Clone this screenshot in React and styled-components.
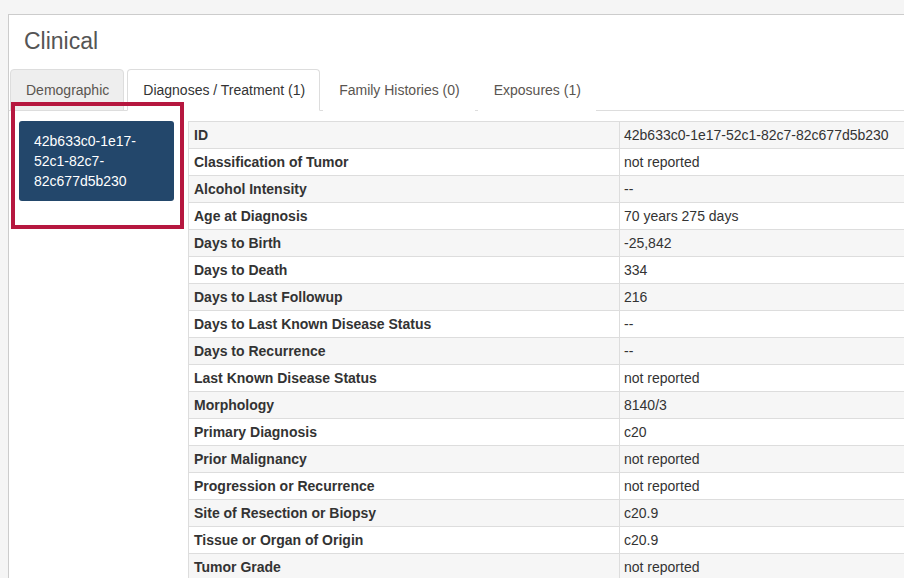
import styled, { createGlobalStyle } from 'styled-components';

const GlobalStyle = createGlobalStyle`
  html, body {
    margin: 0;
    background: #f5f5f5;
    overflow: hidden;
    font-family: "Liberation Sans", Arial, sans-serif;
    color: #333;
  }
`;

// Page + panel
const Page = styled.div`
  padding: 14px 0 0 8px;
  width: 1100px;
`;
const Panel = styled.div`
  background: #fff;
  border: 1px solid #ccc;
  width: 1000px;
  min-height: 600px;
`;
const Title = styled.h2`
  margin: 0;
  padding: 14px 15px 15px;
  font-size: 23px;
  line-height: 25px;
  font-weight: 400;
  color: #555;
`;

// Tabs
const Tabs = styled.ul`
  display: flex;
  list-style: none;
  margin: 0;
  padding: 0 0 0 1px;
  border-bottom: 1px solid #ddd;
`;
const Tab = styled.li`
  margin: 0 3px -1px 0;
  padding: 10px 14px 10px 15px;
  font-size: 14px;
  line-height: 20px;
  border: 1px solid ${p => (p.$active || p.$muted ? '#ddd' : 'transparent')};
  border-bottom-color: ${p => (p.$active ? '#fff' : p.$muted ? '#ddd' : 'transparent')};
  border-radius: 4px 4px 0 0;
  background: ${p => (p.$muted ? '#eee' : '#fff')};
  color: ${p => (p.$active ? '#333' : '#5a5550')};
`;

// Body
const Content = styled.div`
  display: flex;
  gap: 14px;
  padding: 10px 0 0 10px;
`;
const LeftCol = styled.div`
  position: relative;
  width: 155px;
  flex: none;
`;
const CaseButton = styled.div`
  background: #23476b;
  color: #fff;
  border-radius: 3px;
  padding: 10px 15px;
  font-size: 14px;
  line-height: 20px;
`;
const Highlight = styled.div`
  position: absolute;
  left: -8px;
  top: -19px;
  width: 173px;
  height: 127px;
  box-sizing: border-box;
  border: 4px solid #b6173f;
`;

const Table = styled.table`
  border-collapse: collapse;
  width: 760px;
  font-size: 14px;
  line-height: 16px;
  flex: none;
`;
const Row = styled.tr`
  background: ${p => (p.$odd ? '#f6f6f6' : '#fff')};
`;
const Th = styled.th`
  text-align: left;
  font-weight: 700;
  width: 420px;
  padding: 5px;
  border: 1px solid #ddd;
`;
const Td = styled.td`
  padding: 5px 4px;
  border: 1px solid #ddd;
`;

const rows = [
  ['ID', '42b633c0-1e17-52c1-82c7-82c677d5b230'],
  ['Classification of Tumor', 'not reported'],
  ['Alcohol Intensity', '--'],
  ['Age at Diagnosis', '70 years 275 days'],
  ['Days to Birth', '-25,842'],
  ['Days to Death', '334'],
  ['Days to Last Followup', '216'],
  ['Days to Last Known Disease Status', '--'],
  ['Days to Recurrence', '--'],
  ['Last Known Disease Status', 'not reported'],
  ['Morphology', '8140/3'],
  ['Primary Diagnosis', 'c20'],
  ['Prior Malignancy', 'not reported'],
  ['Progression or Recurrence', 'not reported'],
  ['Site of Resection or Biopsy', 'c20.9'],
  ['Tissue or Organ of Origin', 'c20.9'],
  ['Tumor Grade', 'not reported'],
];

export default function App() {
  return (
    <Page>
      <GlobalStyle />
      <Panel>
        <Title>Clinical</Title>
        <Tabs>
          <Tab $muted>Demographic</Tab>
          <Tab $active>Diagnoses / Treatment (1)</Tab>
          <Tab>Family Histories (0)</Tab>
          <Tab>Exposures (1)</Tab>
        </Tabs>
        <Content>
          <LeftCol>
            <CaseButton>42b633c0-1e17-52c1-82c7-82c677d5b230</CaseButton>
            <Highlight />
          </LeftCol>
          <Table>
            <tbody>
              {rows.map(([k, v], i) => (
                <Row key={k} $odd={i % 2 === 0}>
                  <Th>{k}</Th>
                  <Td>{v}</Td>
                </Row>
              ))}
            </tbody>
          </Table>
        </Content>
      </Panel>
    </Page>
  );
}
